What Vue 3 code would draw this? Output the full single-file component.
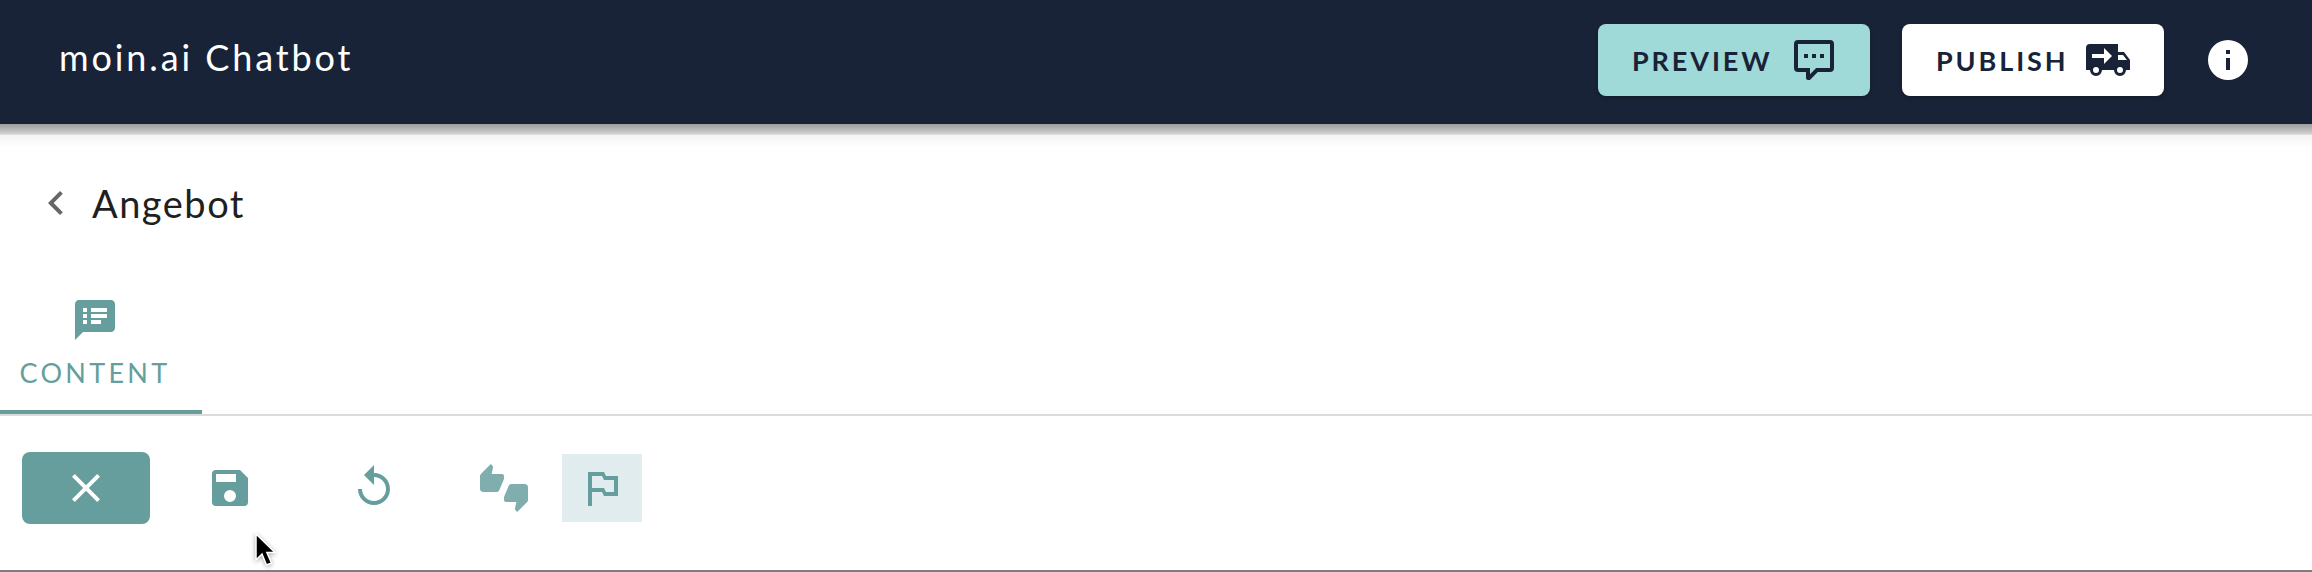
<script setup>
const paths = {
  chat: 'M9 22a1 1 0 0 1-1-1v-3H4a2 2 0 0 1-2-2V4a2 2 0 0 1 2-2h16a2 2 0 0 1 2 2v12a2 2 0 0 1-2 2h-6.1l-3.7 3.71c-.2.19-.45.29-.7.29H9m1-6v3.08L13.08 16H20V4H4v12h6M17 11h-2V9h2v2m-4 0h-2V9h2v2m-4 0H7V9h2v2z',
  truck: 'M3 4a2 2 0 0 0-2 2v11h2a3 3 0 0 0 3 3 3 3 0 0 0 3-3h6a3 3 0 0 0 3 3 3 3 0 0 0 3-3h2v-5l-3-4h-3V4m-7 2 4 4-4 4v-3H4V9h6m7 .5h2.5l1.97 2.5H17M6 15.5A1.5 1.5 0 0 1 7.5 17 1.5 1.5 0 0 1 6 18.5 1.5 1.5 0 0 1 4.5 17 1.5 1.5 0 0 1 6 15.5m12 0a1.5 1.5 0 0 1 1.5 1.5 1.5 1.5 0 0 1-1.5 1.5 1.5 1.5 0 0 1-1.5-1.5 1.5 1.5 0 0 1 1.5-1.5z',
  info: 'M13 9h-2V7h2m0 10h-2v-6h2m-1-9A10 10 0 0 0 2 12a10 10 0 0 0 10 10 10 10 0 0 0 10-10A10 10 0 0 0 12 2z',
  back: 'M15.41 16.58 10.83 12l4.58-4.59L14 6l-6 6 6 6 1.41-1.42z',
  notes: 'M20 2H4c-1.1 0-1.99.9-1.99 2L2 22l4-4h14c1.1 0 2-.9 2-2V4c0-1.1-.9-2-2-2zM8 14H6v-2h2v2zm0-3H6V9h2v2zm0-3H6V6h2v2zm7 6h-5v-2h5v2zm3-3h-8V9h8v2zm0-3h-8V6h8v2z',
  close: 'M19 6.41 17.59 5 12 10.59 6.41 5 5 6.41 10.59 12 5 17.59 6.41 19 12 13.41 17.59 19 19 17.59 13.41 12 19 6.41z',
  save: 'M15 9H5V5h10m-3 14a3 3 0 0 1-3-3 3 3 0 0 1 3-3 3 3 0 0 1 3 3 3 3 0 0 1-3 3m5-16H5a2 2 0 0 0-2 2v14a2 2 0 0 0 2 2h14a2 2 0 0 0 2-2V7l-4-4z',
  replay: 'M12 5V1L7 6l5 5V7c3.31 0 6 2.69 6 6s-2.69 6-6 6-6-2.69-6-6H4c0 4.42 3.58 8 8 8s8-3.58 8-8-3.58-8-8-8z',
  thumbs: 'M12 6c0-.55-.45-1-1-1H5.82l.66-3.18.02-.23c0-.31-.13-.59-.33-.8L5.38 0 .44 4.94C.17 5.21 0 5.59 0 6v6.5c0 .83.67 1.5 1.5 1.5h6.75c.62 0 1.15-.38 1.38-.91l2.26-5.29c.07-.17.11-.36.11-.55V6zm10.5 4h-6.75c-.62 0-1.15.38-1.38.91l-2.26 5.29c-.07.17-.11.36-.11.55V18c0 .55.45 1 1 1h5.18l-.66 3.18-.02.24c0 .31.13.59.33.8l.79.78 4.94-4.94c.27-.27.44-.65.44-1.06v-6.5c0-.83-.67-1.5-1.5-1.5z',
  flag: 'M14 6l-1-2H5v17h2v-7h5l1 2h7V6h-6zm4 8h-4l-1-2H7V6h5l1 2h5v6z'
}
</script>

<template>
  <div class="page">
    <header class="top">
      <div class="brand">moin.ai Chatbot</div>
      <div class="actions">
        <button class="hbtn preview">
          <span>PREVIEW</span>
          <svg class="i48" viewBox="0 0 24 24"><path :d="paths.chat" /></svg>
        </button>
        <button class="hbtn publish">
          <span>PUBLISH</span>
          <svg class="i48" viewBox="0 0 24 24"><path :d="paths.truck" /></svg>
        </button>
        <svg class="i48 info" viewBox="0 0 24 24"><path :d="paths.info" /></svg>
      </div>
    </header>
    <div class="title-row">
      <svg class="i48 back" viewBox="0 0 24 24"><path :d="paths.back" /></svg>
      <h1>Angebot</h1>
    </div>
    <nav class="tabs">
      <div class="tab">
        <svg class="i48" viewBox="0 0 24 24"><path :d="paths.notes" /></svg>
        <span>CONTENT</span>
      </div>
    </nav>
    <div class="toolbar">
      <button class="close-btn">
        <svg class="i48" viewBox="0 0 24 24"><path :d="paths.close" /></svg>
      </button>
      <svg class="i48 save" viewBox="0 0 24 24"><path :d="paths.save" /></svg>
      <svg class="i48 replay" viewBox="0 0 24 24"><path :d="paths.replay" /></svg>
      <svg class="i48 thumbs" viewBox="0 0 24 24"><path :d="paths.thumbs" /></svg>
      <div class="flag-box">
        <svg class="i48" viewBox="0 0 24 24"><path :d="paths.flag" /></svg>
      </div>
    </div>
    <svg class="cursor" width="26" height="36" viewBox="0 0 26 36">
      <path d="M2 1v26l6-6 4.500 11 5-2-4.600-10.500H21z" fill="#000" stroke="#fff" stroke-width="1.500" />
    </svg>
  </div>
</template>

<style>
html, body { margin: 0; background: #fff; }
</style>

<style scoped>
.page {
  position: relative;
  width: 2312px;
  height: 572px;
  overflow: hidden;
  background: #fff;
  font-family: "Lato", sans-serif;
  box-sizing: border-box;
  border-bottom: 2px solid #7d7d7d;
}
.i48 { width: 48px; height: 48px; display: block; fill: currentColor; flex: none; }
.top {
  position: relative;
  height: 124px;
  background: #182337;
  display: flex;
  align-items: center;
  justify-content: space-between;
  padding: 0 60px;
  box-sizing: border-box;
}
.top::after {
  content: "";
  position: absolute;
  left: 0;
  right: 0;
  top: 100%;
  height: 24px;
  background: linear-gradient(#9c9c9c 0, #c4c4c4 32%, #d0d0d0 38%, #cccccc 42%, #f4f4f4 46%, #fff 100%);
}
.brand {
  color: #fff;
  font-size: 36px;
  letter-spacing: 2.9px;
  line-height: 1;
  margin: -10px 0 0 -1px;
}
.actions { display: flex; align-items: center; margin-top: -4px; }
.hbtn {
  height: 72px;
  border: 0;
  border-radius: 8px;
  display: flex;
  align-items: center;
  justify-content: space-between;
  font-family: inherit;
  font-weight: 700;
  font-size: 27px;
  letter-spacing: 2.9px;
  color: #182337;
  box-sizing: border-box;
  padding: 0 32px 0 34px;
  box-shadow: 0 2px 4px rgba(0,0,0,.2);
}
.preview { width: 272px; background: #9fdad9; }
.publish { width: 262px; background: #fff; margin-left: 32px; padding-right: 32px; }
.info { color: #fff; margin-left: 40px; }
.title-row { display: flex; align-items: center; height: 108px; padding: 50px 0 0 32px; box-sizing: border-box; }
.back { color: #666; }
h1 {
  margin: 0 0 0 12px;
  font-weight: 400;
  font-size: 38px;
  letter-spacing: 1.5px;
  color: #1f1f1f;
  line-height: 1;
}
.tabs {
  height: 184px;
  box-sizing: border-box;
  padding-top: 64px;
  border-bottom: 2px solid #dcdcdc;
}
.tab {
  width: 202px;
  height: 118px;
  border-bottom: 4px solid #659e9c;
  box-sizing: border-box;
  padding-right: 12px;
  color: #659e9c;
  display: flex;
  flex-direction: column;
  align-items: center;
}
.tab span { font-size: 27px; letter-spacing: 3.3px; line-height: 1; margin-top: 15px; }
.toolbar {
  display: flex;
  align-items: flex-start;
  padding: 36px 0 0 22px;
  color: #659e9c;
}
.close-btn {
  width: 128px;
  height: 72px;
  border: 0;
  border-radius: 8px;
  background: #659e9c;
  color: #fff;
  display: flex;
  align-items: center;
  justify-content: center;
  padding: 0;
}
.save { margin: 12px 0 0 56px; }
.replay { margin: 11px 0 0 96px; color: #659e9c; }
.thumbs { margin: 12px 0 0 82px; color: #80aeae; }
.flag-box {
  width: 80px;
  height: 68px;
  margin: 2px 0 0 34px;
  background: #e0eced;
  display: flex;
  align-items: center;
  justify-content: center;
  color: #659e9c;
}
.cursor { position: absolute; left: 254px; top: 533px; filter: drop-shadow(0 1px 2px rgba(0,0,0,.35)); }
</style>
